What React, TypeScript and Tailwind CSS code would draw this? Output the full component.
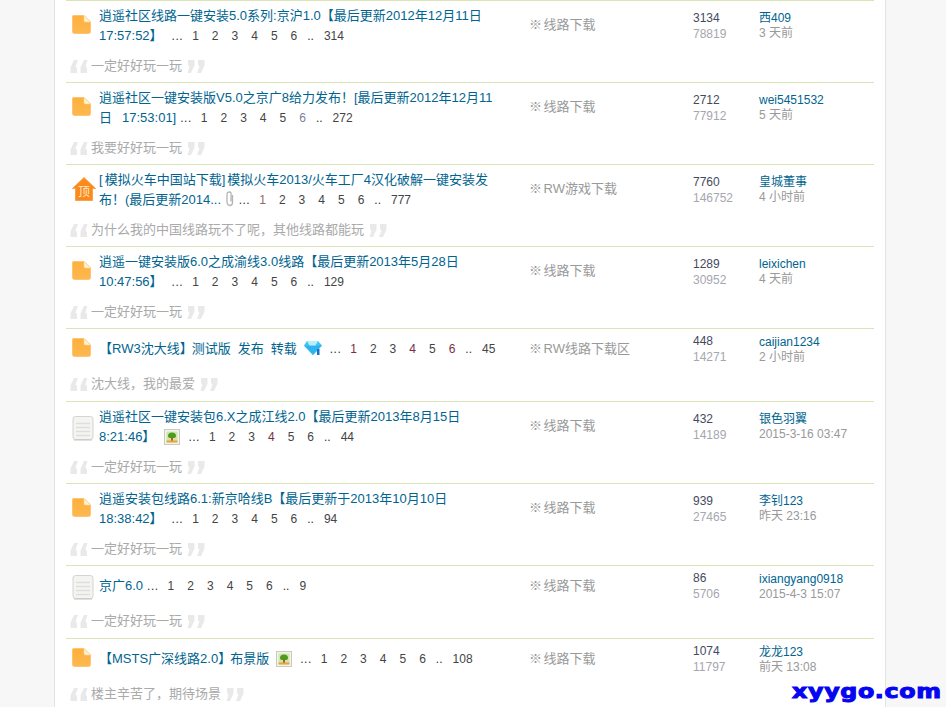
const FONT = "font-['Liberation_Sans','Noto_Sans_CJK_SC',sans-serif]";

type Row = {
  icon: "folder" | "top" | "doc";
  lines: React.ReactNode[];
  quote: string;
  forum: string;
  replies: string;
  views: string;
  user: string;
  time: string;
  single?: boolean;
};

function FolderIcon() {
  return (
    <svg width="19" height="19" viewBox="0 0 19 19" className="block">
      <defs>
        <linearGradient id="fold" x1="0" y1="0" x2="0" y2="1">
          <stop offset="0" stopColor="#fdb03c" />
          <stop offset="1" stopColor="#feb84f" />
        </linearGradient>
      </defs>
      <path d="M1.500 0.500H12L18.500 7V16.500Q18.500 18.500 16.500 18.500H2.500Q0.500 18.500 0.500 16.500V1.500Q0.500 0.500 1.500 0.500Z" fill="url(#fold)" stroke="#fcc474" />
      <path d="M12 0.500V5.500Q12 7 13.500 7H18.500Z" fill="#fff3cf" stroke="#f9d79a" strokeWidth="0.600" />
    </svg>
  );
}

function TopIcon() {
  return (
    <svg width="24" height="24" viewBox="0 0 24 24" className="block">
      <path d="M12 0.500L23.500 11.500H20.500V23.500H3.500V11.500H0.500Z" fill="#fb8a1a" stroke="#f5a550" />
      <text x="12" y="18.500" textAnchor="middle" fontSize="12" fill="#ffe9c8" fontFamily="'Noto Sans CJK SC',sans-serif">顶</text>
    </svg>
  );
}

function DocIcon() {
  return (
    <svg width="22" height="25" viewBox="0 0 22 25" className="block">
      <rect x="1" y="0.500" width="20" height="23" rx="2.500" fill="#f4f4f2" stroke="#d4d4d0" />
      <path d="M2 24H20" stroke="#c4c4c0" />
      <path d="M4 7.500H18M4 11.500H18M4 15.500H18M4 19.500H18" stroke="#dededb" strokeWidth="1.500" />
    </svg>
  );
}

function Gem() {
  return (
    <svg width="20" height="16" viewBox="0 0 20 16" className="inline-block align-[-3px]">
      <path d="M4 1H15L19 5.500L10 15L1 5.500Z" fill="#45c4f5" />
      <path d="M1 5.500H19L10 15Z" fill="#2fb4ef" />
      <path d="M4 1H15L12.500 5.500H6.500Z" fill="#b9eefd" />
      <path d="M14 9H16.500V15H14Z" fill="#1c6fc0" />
    </svg>
  );
}

function Pic() {
  return (
    <svg width="16" height="16" viewBox="0 0 16 16" className="inline-block align-[-4px]">
      <rect x="0.500" y="0.500" width="15" height="15" fill="#f4f4ee" stroke="#c9c9c2" />
      <rect x="2.500" y="2.500" width="11" height="11" fill="#cfe8a8" />
      <path d="M4 7Q4 3.500 8 3.500T12 7Q12 9 9 9H7Q4 9 4 7Z" fill="#4d9b20" />
      <path d="M7 8H9V12H7Z" fill="#a8642a" />
      <path d="M2.500 11.500H13.500V13.500H2.500Z" fill="#e8a43c" />
    </svg>
  );
}

function Clip() {
  return (
    <svg width="10" height="16" viewBox="0 0 10 16" className="inline-block align-[-3px]">
      <path d="M7.500 4V11.500Q7.500 14.500 5 14.500T2 11.500V3.500Q2 1 4.300 1T6 3.500V10.500" fill="none" stroke="#b4b4b4" strokeWidth="1.300" />
    </svg>
  );
}

function Quotes({ text }: { text: string }) {
  const mark = (
    <svg width="18" height="15" viewBox="0 0 18 15" className="block">
      <path d="M4 1H8L5.500 7.500Q7 8 7 10V14H0.500V8.500Z" fill="#e9e9e9" />
      <path d="M14 1H17.500L15.500 7.500Q17 8 17 10V14H10.500V8.500Z" fill="#e9e9e9" />
    </svg>
  );
  return (
    <div className="flex h-5 items-center text-[13px] text-[#aaaaaa]">
      <span className="ml-[4px] w-[21px]">{mark}</span>
      <span>{text}</span>
      <span className="ml-[5px] rotate-180">{mark}</span>
    </div>
  );
}

// page numbers after the title, colours follow visited links in the picture
function Pages({ last, dots = "ml-[9px]", colors = {} }: { last: string; dots?: string; colors?: Record<number, string> }) {
  return (
    <span className="text-[12px] text-[#444444]">
      <span className={`${dots} mr-[9px] tracking-[0.5px] text-[#333333]`}>...</span>
      {[1, 2, 3, 4, 5, 6].map((n) => (
        <span key={n} className={`${n > 1 ? "ml-[13px]" : ""} ${colors[n] ?? ""}`}>{n}</span>
      ))}
      <span className="ml-[10px] text-[#333333]">..</span>
      <span className="ml-[10px]">{last}</span>
    </span>
  );
}

const RED = "text-[#7a2f45]";
const BROWN = "text-[#8a6a6a]";
const BLUEGREY = "text-[#7b7f9c]";

const rows: Row[] = [
  {
    icon: "folder",
    lines: [
      "逍遥社区线路一键安装5.0系列:京沪1.0【最后更新2012年12月11日",
      <>17:57:52】<Pages last="314" /></>,
    ],
    quote: "一定好好玩一玩",
    forum: "※ 线路下载",
    replies: "3134",
    views: "78819",
    user: "西409",
    time: "3 天前",
  },
  {
    icon: "folder",
    lines: [
      "逍遥社区一键安装版V5.0之京广8给力发布！[最后更新2012年12月11",
      <>日<span className="ml-[10px]">17:53:01]</span><Pages last="272" dots="ml-[4px]" colors={{ 6: BLUEGREY }} /></>,
    ],
    quote: "我要好好玩一玩",
    forum: "※ 线路下载",
    replies: "2712",
    views: "77912",
    user: "wei5451532",
    time: "5 天前",
  },
  {
    icon: "top",
    lines: [
      <>[<span className="ml-[2px]">模拟火车中国站下载</span><span className="mr-[2px]">]</span>模拟火车2013/火车工厂4汉化破解一键安装发</>,
      <>布！(最后更新2014... <Clip /><Pages last="777" dots="ml-[4px]" colors={{ 1: BROWN }} /></>,
    ],
    quote: "为什么我的中国线路玩不了呢，其他线路都能玩",
    forum: "※ RW游戏下载",
    replies: "7760",
    views: "146752",
    user: "皇城董事",
    time: "4 小时前",
  },
  {
    icon: "folder",
    lines: [
      "逍遥一键安装版6.0之成渝线3.0线路【最后更新2013年5月28日",
      <>10:47:56】<Pages last="129" /></>,
    ],
    quote: "一定好好玩一玩",
    forum: "※ 线路下载",
    replies: "1289",
    views: "30952",
    user: "leixichen",
    time: "4 天前",
  },
  {
    icon: "folder",
    single: true,
    lines: [
      <>【RW3沈大线<span className="tracking-[-1px]">】</span>测试版<span className="ml-[7px]">发布</span><span className="ml-[7px]">转载</span><span className="ml-[6px]"><Gem /></span><Pages last="45" dots="ml-[7px]" colors={{ 1: RED, 4: RED, 6: RED }} /></>,
    ],
    quote: "沈大线，我的最爱",
    forum: "※ RW线路下载区",
    replies: "448",
    views: "14271",
    user: "caijian1234",
    time: "2 小时前",
  },
  {
    icon: "doc",
    lines: [
      "逍遥社区一键安装包6.X之成江线2.0【最后更新2013年8月15日",
      <>8:21:46】<span className="ml-[9px]"><Pic /></span><Pages last="44" dots="ml-[8px]" colors={{ 4: RED }} /></>,
    ],
    quote: "一定好好玩一玩",
    forum: "※ 线路下载",
    replies: "432",
    views: "14189",
    user: "银色羽翼",
    time: "2015-3-16 03:47",
  },
  {
    icon: "folder",
    lines: [
      "逍遥安装包线路6.1:新京哈线B【最后更新于2013年10月10日",
      <>18:38:42】<Pages last="94" /></>,
    ],
    quote: "一定好好玩一玩",
    forum: "※ 线路下载",
    replies: "939",
    views: "27465",
    user: "李钊123",
    time: "昨天 23:16",
  },
  {
    icon: "doc",
    single: true,
    lines: [<>京广6.0<Pages last="9" dots="ml-[4px]" /></>],
    quote: "一定好好玩一玩",
    forum: "※ 线路下载",
    replies: "86",
    views: "5706",
    user: "ixiangyang0918",
    time: "2015-4-3 15:07",
  },
  {
    icon: "folder",
    single: true,
    lines: [
      <>【MSTS广深线路2.0<span className="tracking-[-1px]">】</span>布景版<span className="ml-[7px]"><Pic /></span><Pages last="108" dots="ml-[8px]" /></>,
    ],
    quote: "楼主辛苦了，期待场景",
    forum: "※ 线路下载",
    replies: "1074",
    views: "11797",
    user: "龙龙123",
    time: "前天 13:08",
  },
];

function ThreadRow({ row }: { row: Row }) {
  return (
    <div className={`flex border-t border-[#dce5b8] ${row.single ? "h-[73px]" : "h-[82px]"}`}>
      <div className={`flex w-[33px] justify-start pl-[6px] ${row.single ? "pt-[9px]" : "pt-[14px]"}`}>
        {row.icon === "folder" && <FolderIcon />}
        {row.icon === "top" && <div className="-mt-[2px]"><TopIcon /></div>}
        {row.icon === "doc" && <DocIcon />}
      </div>
      <div className="w-[430px]">
        <div className={`text-[13px] leading-5 text-[#00648f] ${row.single ? "pt-[10px] pb-[15px]" : "pt-[5px] pb-[10px]"}`}>
          {row.lines.map((line, i) => (
            <div key={i} className="whitespace-nowrap">{line}</div>
          ))}
        </div>
        <div className="-ml-[33px]"><Quotes text={row.quote} /></div>
      </div>
      <div className={`w-[164px] text-[13px] text-[#999999] [word-spacing:-2px] ${row.single ? "pt-[10px]" : "pt-[14px]"}`}>
        {row.forum}
      </div>
      <div className={`w-[66px] text-[12px] leading-4 ${row.single ? "pt-[4px]" : "pt-[9px]"}`}>
        <div className="text-[#444a5e]">{row.replies}</div>
        <div className="text-[#a6a6b0]">{row.views}</div>
      </div>
      <div className={`flex-1 text-[12px] leading-[15px] ${row.single ? "pt-[6px]" : "pt-[10px]"}`}>
        <div className="text-[#00648f]">{row.user}</div>
        <div className="text-[#999999]">{row.time}</div>
      </div>
    </div>
  );
}

export default function App() {
  return (
    <div className={`relative h-[707px] w-[946px] overflow-hidden bg-[#f7f7f7] ${FONT}`}>
      <div className="mx-[54px] h-full w-[832px] border-x border-[#e3e3e3] bg-white px-[11px]">
        {rows.map((row, i) => (
          <ThreadRow key={i} row={row} />
        ))}
      </div>
      <div className="absolute bottom-[4px] right-[4px] origin-right scale-x-125 font-['DejaVu_Sans'] text-[19px] leading-6 font-bold tracking-[0.5px] text-[#0505f0] [-webkit-text-stroke:1px_#0505f0]">
        xyygo.com
      </div>
    </div>
  );
}
